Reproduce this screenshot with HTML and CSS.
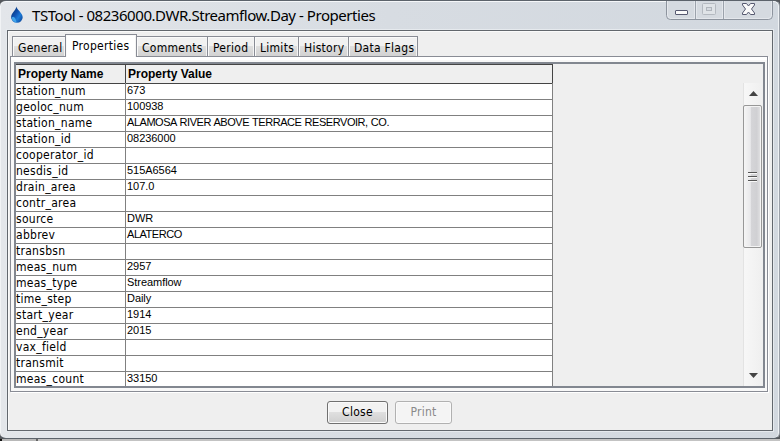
FILE: index.html
```html
<!DOCTYPE html>
<html lang="en">
<head>
<meta charset="utf-8">
<title>TSTool - Properties</title>
<link rel="stylesheet" href="styles.css">
</head>
<body>
<div class="window">
  <header class="titlebar">
    <svg class="drop" width="14" height="18" viewBox="0 0 14 18">
      <defs><linearGradient id="water" x1="0" y1="0" x2="1" y2="1"><stop offset="0" stop-color="#04285c"/><stop offset=".45" stop-color="#1054b4"/><stop offset=".65" stop-color="#1b7ad6"/><stop offset="1" stop-color="#0b3a8c"/></linearGradient></defs>
      <path d="M6.3 .5C7 4 12.700 7 12.700 11.300A5.800 5.500 0 0 1 1.100 11.300C1.100 7 6 4.500 6.300 .5Z" fill="url(#water)"/>
      <path d="M1.700 11.500C4 9.500 5.500 12 6.500 16.300C3.500 16 1.600 14 1.700 11.500Z" fill="#42a5e8"/>
    </svg>
    <h1 class="title">TSTool - 08236000.DWR.Streamflow.Day - Properties</h1>
    <div class="controls">
      <svg width="108" height="21" viewBox="0 0 108 21">
        <path d="M.5 0V14.500Q.5 18.500 4.500 18.500H102.500Q106.500 18.500 106.500 14.500V0" fill="#d5dae0" stroke="#8d949e"/>
        <path d="M1.500 0V14Q1.500 17.500 5 17.500H102Q105.500 17.500 105.500 14V0M28.500 0V17M30.500 0V17M56.500 0V17M58.500 0V17" fill="none" stroke="#e9edf1" stroke-opacity=".7"/>
        <path d="M29.500 0V18M57.500 0V18" stroke="#9ba2ab"/>
        <rect x="9.500" y="9.500" width="12" height="4" rx=".5" fill="#fafafa" stroke="#565970"/>
        <rect x="36.500" y="2.500" width="13" height="11" rx="1" fill="#dfe3e7" stroke="#b4b9c0"/>
        <rect x="40.500" y="6.500" width="5" height="3" fill="#d5dae0" stroke="#b0b5bc"/>
        <path d="M76.500 2.500H80.500L82.500 5L84.500 2.500H88.500V4L85.500 8L88.500 12V13.500H84.500L82.500 11L80.500 13.500H76.500V12L79.500 8L76.500 4Z" fill="#fafafa" stroke="#565970"/>
      </svg>
    </div>
  </header>
  <main class="client">
    <nav class="tabs">
      <span class="tab general">General</span>
      <span class="tab properties active">Properties</span>
      <span class="tab comments">Comments</span>
      <span class="tab period">Period</span>
      <span class="tab limits">Limits</span>
      <span class="tab history">History</span>
      <span class="tab flags">Data Flags</span>
    </nav>
    <section class="panel">
      <div class="viewport">
        <div class="grid">
          <div class="row head"><span class="name">Property Name</span><span class="value">Property Value</span></div>
          <div class="row"><span class="name">station_num</span><span class="value">673</span></div>
          <div class="row"><span class="name">geoloc_num</span><span class="value">100938</span></div>
          <div class="row"><span class="name">station_name</span><span class="value caps">ALAMOSA RIVER ABOVE TERRACE RESERVOIR, CO.</span></div>
          <div class="row"><span class="name">station_id</span><span class="value">08236000</span></div>
          <div class="row"><span class="name">cooperator_id</span><span class="value"></span></div>
          <div class="row"><span class="name">nesdis_id</span><span class="value">515A6564</span></div>
          <div class="row"><span class="name">drain_area</span><span class="value">107.0</span></div>
          <div class="row"><span class="name">contr_area</span><span class="value"></span></div>
          <div class="row"><span class="name">source</span><span class="value">DWR</span></div>
          <div class="row"><span class="name">abbrev</span><span class="value caps">ALATERCO</span></div>
          <div class="row"><span class="name">transbsn</span><span class="value"></span></div>
          <div class="row"><span class="name">meas_num</span><span class="value">2957</span></div>
          <div class="row"><span class="name">meas_type</span><span class="value">Streamflow</span></div>
          <div class="row"><span class="name">time_step</span><span class="value">Daily</span></div>
          <div class="row"><span class="name">start_year</span><span class="value">1914</span></div>
          <div class="row"><span class="name">end_year</span><span class="value">2015</span></div>
          <div class="row"><span class="name">vax_field</span><span class="value"></span></div>
          <div class="row"><span class="name">transmit</span><span class="value"></span></div>
          <div class="row last"><span class="name">meas_count</span><span class="value">33150</span></div>
        </div>
        <div class="scrollbar">
          <svg class="arrow" width="9" height="5" viewBox="0 0 9 5"><path d="M0 5L4.500 0L9 5Z" fill="#444"/></svg>
          <div class="thumb"><i></i><i></i><i></i></div>
          <svg class="arrow down" width="9" height="5" viewBox="0 0 9 5"><path d="M0 0L4.500 5L9 0Z" fill="#444"/></svg>
        </div>
      </div>
    </section>
    <footer class="actions">
      <button class="button close">Close</button>
      <button class="button print" disabled>Print</button>
    </footer>
  </main>
</div>
<div class="behind"></div>
</body>
</html>
```
FILE: styles.css
```css
* { box-sizing: border-box; }
body {
  margin: 0;
  width: 780px;
  height: 441px;
  overflow: hidden;
  background: #55585c;
  color: #000;
  font-family: "DejaVu Sans Condensed", "DejaVu Sans", sans-serif;
  font-stretch: condensed;
  font-size: 12px;
  letter-spacing: .28px;
}
.window {
  height: 439px;
  padding: 0 6px 0 7px;
  border: 1px solid #5c636b;
  border-left-color: #a4a9ae;
  border-right-color: #9aa0a8;
  border-width: 1px 1px 1px 0;
  border-radius: 6px;
  background: linear-gradient(90deg, #e3e6ea, #d7dce2 50%, #d2d8df);
  box-shadow: inset 0 1px #f5f7f9, inset 1px 0 #f1f3f5, inset -1px 0 #eef1f4;
}
.titlebar { display: flex; height: 29px; }
.drop { margin: 5px 0 0 3px; }
.title {
  flex: 1;
  margin: 0 0 0 8px;
  font: 400 15px/29px "Noto Sans", sans-serif;
  letter-spacing: -.45px;
  white-space: nowrap;
}
.controls { width: 108px; margin-right: -1px; }
.controls svg { display: block; }
.client {
  height: 401px;
  padding: 3px 4px 0 2px;
  border: 1px solid #62676d;
  background: #efefef;
  box-shadow: inset 1px 1px #fafafa, 0 0 0 1px #e6eaee;
}
.tabs {
  display: flex;
  align-items: flex-end;
  height: 22px;
  padding-left: 2px;
}
.tab {
  height: 20px;
  padding-left: 5px;
  border: 1px solid #898c95;
  border-width: 1px 1px 0 0;
  box-shadow: inset 1px 1px #fafafa, inset -1px 0 #f4f4f4;
  background: linear-gradient(#f1f1f1 0 50%, #dfdfdf 50%, #d2d2d2);
  line-height: 22px;
  white-space: nowrap;
}
.general { width: 53px; border-left-width: 1px; border-right-width: 0; }
.properties { width: 72px; }
.comments { width: 71px; }
.period { width: 47px; }
.limits { width: 44px; }
.history { width: 50px; }
.flags { width: 69px; }
.active {
  position: relative;
  height: 23px;
  margin-bottom: -1px;
  padding-left: 6px;
  border-left-width: 1px;
  background: #fff;
  line-height: 22px;
}
.panel {
  height: 336px;
  padding: 5px 2px 3px 3px;
  border: 1px solid #898c95;
  background: #f8f8f8;
  box-shadow: inset 0 3px #fff, 1px 1px #fff;
}
.viewport {
  display: flex;
  justify-content: space-between;
  height: 326px;
  border: 2px solid #828790;
  background: #efefef;
  overflow: hidden;
}
.grid { width: 537px; }
.row {
  display: grid;
  grid-template-columns: 110px 427px;
  height: 16px;
  background: #fff;
  line-height: 16px;
}
.row > span {
  border: 1px solid #808080;
  border-width: 0 1px 1px 0;
  white-space: nowrap;
}
.value { padding-left: 1px; font: 11px/15px "Liberation Sans", sans-serif; letter-spacing: -.05px; }
.caps { letter-spacing: -.41px; word-spacing: .6px; }
.row .caps { letter-spacing: -.46px; }
.head { height: 19px; background: #efefef; }
.head > span {
  border: 1px solid #444;
  border-width: 1px 1px 1px 0;
  padding-left: 2px;
  font: bold 12px/18px "Liberation Sans", sans-serif;
  letter-spacing: 0;
}
.last > span { border-bottom-width: 0; }
.scrollbar {
  display: flex;
  flex-direction: column;
  align-items: center;
  width: 20px;
  margin-top: 19px;
  padding-right: 1px;
  border-left: 1px solid #e3e3e3;
  background: linear-gradient(90deg, #f7f7f7, #efefef);
}
.arrow { flex: none; margin: 8px 0 9px; }
.thumb {
  display: flex;
  flex: none;
  flex-direction: column;
  align-items: center;
  justify-content: center;
  gap: 2px;
  width: 19px;
  height: 143px;
  margin-left: -1px;
  border: 1px solid #979797;
  border-radius: 2px;
  background: linear-gradient(90deg, #f5f5f5, #e8e8ea 38%, #d5d5d8 40%, #d0d0d3 75%, #e4e4e5);
  box-shadow: inset 0 0 0 1px #f4f4f4;
}
.thumb i { width: 9px; height: 2px; border-top: 1px solid #555; background: #f8f8f8; }
.down { margin: auto 0 8px; }
.actions {
  display: flex;
  justify-content: center;
  gap: 7px;
  margin: 9px 0 0 1px;
}
.button {
  height: 23px;
  padding: 0;
  border: 1px solid #707070;
  border-radius: 3px;
  background: linear-gradient(#f2f2f2 0 48%, #dfdfdf 50%, #cfcfcf);
  box-shadow: inset 0 0 0 1px #fafafa;
  color: #000;
  font: inherit;
  letter-spacing: inherit;
  line-height: 21px;
}
.close { width: 61px; }
.print { width: 57px; border-color: #b1b1b1; background: #f4f4f4; color: #898989; }
.behind { height: 2px; background: linear-gradient(90deg, #111 0 2px, #b8b8b8 2px 36px, #666 36px 38px, #c3c3c3 38px); }
```
